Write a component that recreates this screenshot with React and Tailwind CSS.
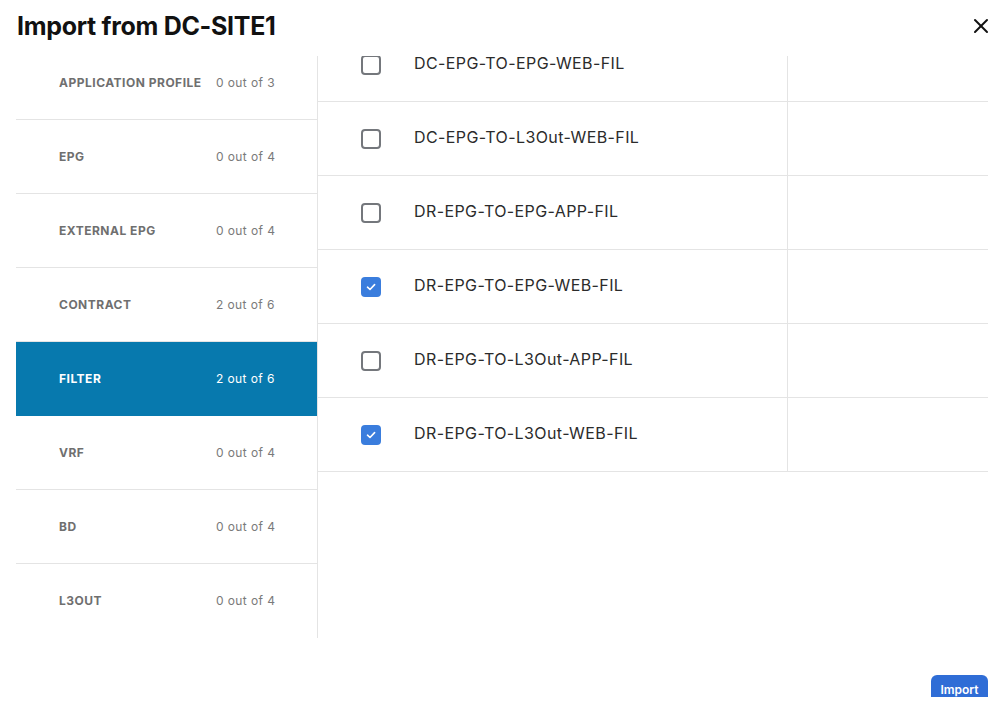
import React from 'react';
import { X } from 'lucide-react';

const CATEGORIES = [
  { label: 'APPLICATION PROFILE', count: '0 out of 3' },
  { label: 'EPG', count: '0 out of 4' },
  { label: 'EXTERNAL EPG', count: '0 out of 4' },
  { label: 'CONTRACT', count: '2 out of 6' },
  { label: 'FILTER', count: '2 out of 6', active: true },
  { label: 'VRF', count: '0 out of 4' },
  { label: 'BD', count: '0 out of 4' },
  { label: 'L3OUT', count: '0 out of 4' },
];

const FILTERS = [
  { name: 'DC-EPG-TO-EPG-WEB-FIL', checked: false },
  { name: 'DC-EPG-TO-L3Out-WEB-FIL', checked: false },
  { name: 'DR-EPG-TO-EPG-APP-FIL', checked: false },
  { name: 'DR-EPG-TO-EPG-WEB-FIL', checked: true },
  { name: 'DR-EPG-TO-L3Out-APP-FIL', checked: false },
  { name: 'DR-EPG-TO-L3Out-WEB-FIL', checked: true },
];

function Checkbox({ checked }) {
  if (checked) {
    return (
      <span className="w-[20px] h-[20px] rounded-[4px] bg-[#3a7ddd] flex items-center justify-center flex-shrink-0">
        <svg width="12" height="12" viewBox="0 0 12 12" fill="none">
          <path d="M2.5 6.2 L5 8.5 L9.6 3.6" stroke="#fff" strokeWidth="1.6" strokeLinecap="round" strokeLinejoin="round" />
        </svg>
      </span>
    );
  }
  return <span className="w-[20px] h-[20px] rounded-[4px] border-2 border-[#74777c] bg-white flex-shrink-0" />;
}

export default function App() {
  return (
    <div className="w-[999px] h-[707px] bg-white overflow-hidden flex flex-col font-['Inter',sans-serif]">
      {/* Header */}
      <div className="h-[52px] mb-[4px] flex items-center justify-between pl-[17px] pr-[6px]">
        <h1 className="text-[25px] font-bold text-[#111] tracking-[-0.3px] leading-none">Import from DC-SITE1</h1>
        <X size={24} strokeWidth={2} color="#111" />
      </div>

      {/* Body */}
      <div className="flex pl-[16px] pr-[11px]">
        {/* Categories */}
        <div className="w-[302px] h-[582px] border-r border-[#e4e4e4] overflow-hidden flex-shrink-0">
          <div className="-mt-[10px]">
            {CATEGORIES.map(({ label, count, active }, i) => (
              <div
                key={label}
                className={`h-[74px] flex items-center pl-[43px] ${i < CATEGORIES.length - 1 ? 'border-b' : ''} ${active ? 'bg-[#0779ae] border-[#0779ae]' : 'border-[#e4e4e4]'}`}
              >
                <span className={`w-[157px] text-[12px] font-bold tracking-[0.5px] ${active ? 'text-white' : 'text-[#6f6f6f]'}`}>{label}</span>
                <span className={`text-[12px] tracking-[0.4px] ${active ? 'text-white' : 'text-[#7a7a7a]'}`}>{count}</span>
              </div>
            ))}
          </div>
        </div>

        {/* Filters table */}
        <div className="flex-1 overflow-hidden self-start">
          <div className="-mt-[28px]">
            {FILTERS.map(({ name, checked }) => (
              <div key={name} className="h-[74px] flex border-b border-[#e4e4e4]">
                <div className="w-[470px] border-r border-[#e4e4e4] flex items-center pl-[43px] gap-[33px]">
                  <Checkbox checked={checked} />
                  <span className="text-[16px] leading-none pb-[3px] text-[#2b2b2b] tracking-[0.4px]">{name}</span>
                </div>
                <div className="flex-1" />
              </div>
            ))}
          </div>
        </div>
      </div>

      {/* Footer */}
      <div className="flex justify-end pr-[11px] mt-[37px]">
        <button className="w-[57px] h-[22px] rounded-t-[6px] bg-[#2f6dd6] text-white text-[12px] font-semibold pt-[7px] leading-none">
          Import
        </button>
      </div>
    </div>
  );
}
